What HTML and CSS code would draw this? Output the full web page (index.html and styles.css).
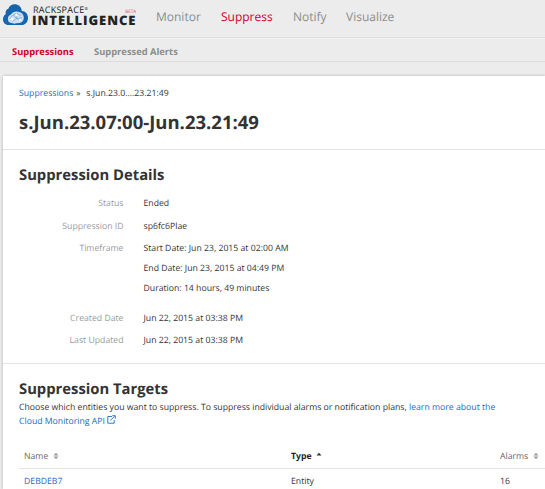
FILE: index.html
```html
<!DOCTYPE html>
<html lang="en">
<head>
<meta charset="utf-8">
<title>Rackspace Intelligence</title>
<link rel="stylesheet" href="styles.css">
</head>
<body>
<header class="header">
  <div class="logo">
    <svg class="cloud" viewBox="0 0 26 22" width="26" height="22">
      <path d="M5.500 21C2.200 21 0 18.600 0 15.500c0-2.500 1.100-4.500 2.700-5.300-.6-3 1-5 2.600-5.400C6.300 2 8.800.3 11.500.3c4 0 7 2.700 7.300 6.600 3.700.1 6.200 3 6.200 6.800 0 4.300-2.700 7.300-6.400 7.300z" fill="#1464ae"/>
      <path d="M5 16c-.6-2.600.8-5 3-5.600C9.500 8 12.400 6.900 15 7.700c3.600.3 6 3.200 5.800 6.300-.2 2.900-1.800 4.800-4.300 5.100l-3.200.2-2 .4-2.600-.7c-1.900 0-3.400-1.100-3.700-3z" fill="#cde1f2"/>
      <path d="M6.500 14.500l3-3 3.500-2 5.500 2M10.500 11l3 3.500 5.500-.8M13.500 14.500l-4 3M13.500 14.500l4 3M14.500 8.500l-1 6" fill="none" stroke="#5f9bd0" stroke-width=".6"/>
      <path d="M7 15.500l2-2 1.500 1-.5 2zM12 11l1.500-2 1.500 2-1 1.500zM15.500 16l2-1 .5 1.500-1.500 1z" fill="#fff"/>
    </svg>
    <div class="wordmark">
      <div class="brand">RACKSPACE<span class="reg">®</span></div>
      <div class="product">INTELLIGENCE</div>
      <span class="beta">BETA</span>
    </div>
  </div>
  <nav class="nav">
    <a class="n1">Monitor</a><a class="n2 active">Suppress</a><a class="n3">Notify</a><a class="n4">Visualize</a>
  </nav>
</header>
<nav class="subnav"><a class="s1 active">Suppressions</a><a class="s2">Suppressed Alerts</a></nav>
<main class="card">
  <section class="intro">
    <div class="crumbs"><a class="link">Suppressions</a><span class="sep">»</span><span class="here">s.Jun.23.0....23.21:49</span></div>
    <h1>s.Jun.23.07:00-Jun.23.21:49</h1>
  </section>
  <section class="details">
    <h2>Suppression Details</h2>
    <dl>
      <dt>Status</dt><dd>Ended</dd>
      <dt>Suppression ID</dt><dd>sp6fc6Plae</dd>
      <dt>Timeframe</dt><dd class="times"><div>Start Date: Jun 23, 2015 at 02:00 AM</div><div>End Date: Jun 23, 2015 at 04:49 PM</div><div>Duration: 14 hours, 49 minutes</div></dd>
      <dt>Created Date</dt><dd>Jun 22, 2015 at 03:38 PM</dd>
      <dt>Last Updated</dt><dd>Jun 22, 2015 at 03:38 PM</dd>
    </dl>
  </section>
  <section class="targets">
    <h2>Suppression Targets</h2>
    <p>Choose which entities you want to suppress. To suppress individual alarms or notification plans, <a class="link">learn more about the<br>Cloud Monitoring API <svg class="ext" viewBox="0 0 9 9" width="9" height="9"><path d="M5 1.500H.8v6.700h6.400V5M3.300 5.500L7.600 1.200M5.300.7h3v3" fill="none" stroke="#2f7cc9" stroke-width="1"/></svg></a></p>
    <div class="table">
      <div class="row head">
        <span>Name <svg class="sort" viewBox="0 0 6 8" width="6" height="8"><path d="M.5 3.600L3 .8l2.500 2.800zM.5 4.400L3 7.200l2.500-2.800z" fill="#999"/></svg></span>
        <span class="sorted">Type <svg class="sort" viewBox="0 0 6 8" width="6" height="8"><path d="M.5 3.500L3 .8l2.500 2.700z" fill="#333"/></svg></span>
        <span>Alarms <svg class="sort" viewBox="0 0 6 8" width="6" height="8"><path d="M.5 3.600L3 .8l2.500 2.800zM.5 4.400L3 7.200l2.500-2.800z" fill="#999"/></svg></span>
      </div>
      <div class="row"><a class="link">DEBDEB7</a><span>Entity</span><span>16</span></div>
    </div>
  </section>
</main>
</body>
</html>
```
FILE: styles.css
```css
* { box-sizing: border-box; }
body {
  margin: 0;
  height: 489px;
  overflow: hidden;
  background: #ececec;
  color: #333;
  font: 8.700px/14px "Open Sans", sans-serif;
  text-rendering: geometricPrecision;
  white-space: nowrap;
}
h1, h2, p, dl, dd { margin: 0; }
.link { color: #1a69c4; }
.header {
  display: flex;
  height: 38px;
  border-bottom: 1px solid #dcdcdc;
}
.logo { display: flex; width: 156px; padding: 4px 0 0 3px; color: #222; }
.cloud { flex: none; }
.wordmark { position: relative; width: 104px; margin-left: 3px; }
.brand { height: 10px; padding-left: 1px; font-size: 9px; line-height: 11px; letter-spacing: .25px; color: #222; }
.reg { font-size: 4px; line-height: 4px; vertical-align: 3px; }
.product { font-size: 13px; line-height: 12px; font-weight: 800; letter-spacing: .95px; }
.beta { position: absolute; top: 5px; right: 0; font-size: 4.500px; line-height: 6px; color: #e0315a; }
.nav { display: flex; font-size: 12px; line-height: 33px; color: #8c8c8c; }
.n1 { width: 65px; }
.n2 { width: 72px; }
.n3 { width: 53px; }
.nav .active, .subnav .active { color: #d4002a; }
.subnav {
  display: flex;
  height: 24px;
  padding-left: 12px;
  border-top: 1px solid #f3f3f3;
  border-bottom: 1px solid #dcdcdc;
  font-size: 9.350px;
  font-weight: 700;
  line-height: 26px;
  color: #8c8c8c;
}
.s1 { width: 82px; }
.card {
  height: 413px;
  margin: 14px 0 0 3px;
  background: #fff;
  box-shadow: 0 0 3px rgba(0, 0, 0, .25);
}
.intro { height: 74px; padding: 10px 16px 0; border-bottom: 1px solid #e3e3e3; }
.crumbs { display: flex; height: 14px; }
.sep { width: 10px; margin-left: 3px; }
h1 { margin-top: 10px; font-size: 18.500px; line-height: 26px; }
h2 { font-size: 14.800px; line-height: 20px; }
.details { height: 214px; padding: 15px 16px 0; border-bottom: 1px solid #e3e3e3; }
dl {
  display: grid;
  grid-template-columns: 104.500px 1fr;
  grid-template-rows: 23px 22px 70px 22px 22px;
  column-gap: 20px;
  margin-top: 11px;
}
dt { text-align: right; color: #999; }
.times { line-height: 20px; margin-top: -3px; }
.targets { padding: 15px 16px 0; }
.targets p { margin-top: 1px; }
.ext { vertical-align: 0; }
.table { margin-top: 15px; margin-right: -16px; }
.row {
  display: grid;
  grid-template-columns: 267px 209px 1fr;
  height: 26px;
  padding-left: 5px;
  line-height: 25px;
}
.head { border-bottom: 1px solid #e3e3e3; color: #666; line-height: 26px; }
.sorted { font-weight: 700; color: #222; }
.sort { margin-left: 2.500px; vertical-align: -1px; }
```
